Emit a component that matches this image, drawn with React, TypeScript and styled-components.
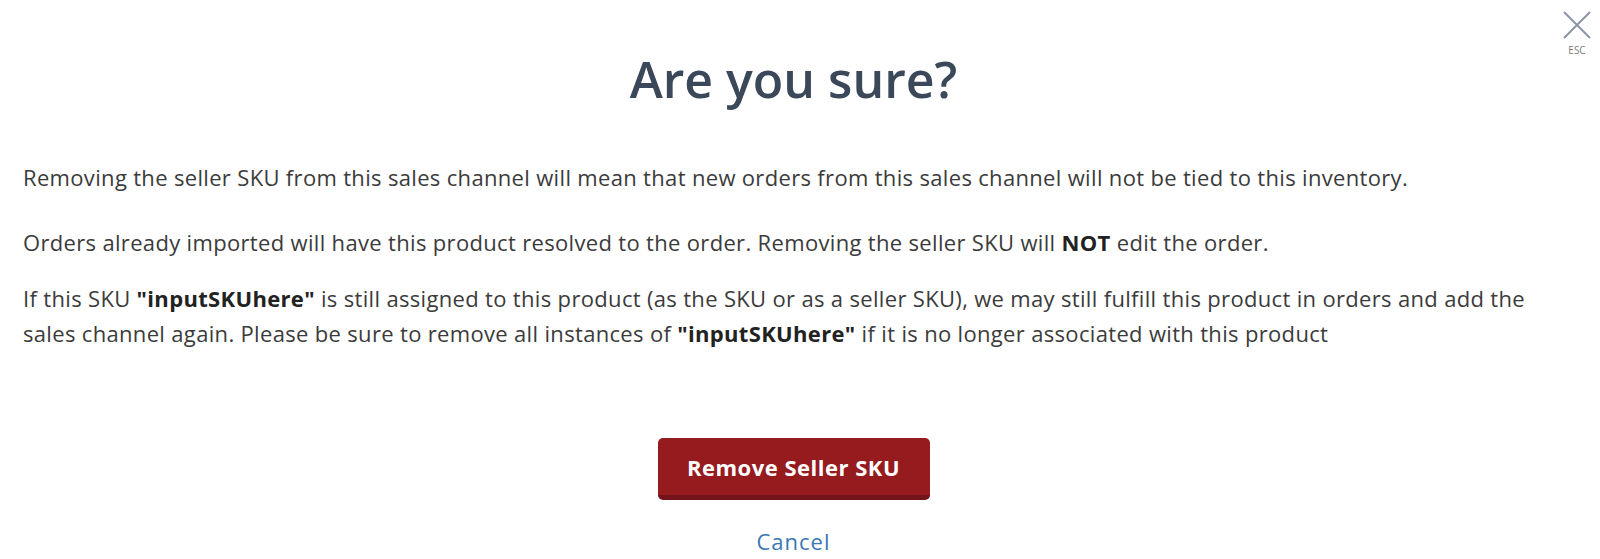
import React from "react";
import styled, { createGlobalStyle } from "styled-components";

const GlobalStyle = createGlobalStyle`
  html, body {
    margin: 0;
    padding: 0;
    background: #ffffff;
  }
  body {
    font-family: "Open Sans", "Lato", sans-serif;
    -webkit-font-smoothing: antialiased;
  }
`;

const Modal = styled.div`
  position: relative;
  width: 1600px;
  height: 559px;
  box-sizing: border-box;
  padding: 0 36px 0 23px;
  display: flex;
  flex-direction: column;
  overflow: hidden;
`;

const CloseButton = styled.button`
  position: absolute;
  top: 11px;
  right: 6px;
  width: 34px;
  border: none;
  background: transparent;
  padding: 0;
  display: flex;
  flex-direction: column;
  align-items: center;
  cursor: pointer;
`;

const EscLabel = styled.span`
  font-family: "Open Sans", sans-serif;
  font-size: 10px;
  line-height: 12px;
  color: #7a7a7a;
  margin-top: 5px;
`;

const Title = styled.h1`
  margin: 48px 0 0;
  font-size: 50px;
  line-height: 62px;
  font-weight: 600;
  color: #3b4859;
  text-align: center;
`;

const Body = styled.div`
  margin-top: 50px;
  display: flex;
  flex-direction: column;
`;

const Paragraph = styled.p<{ $gapAfter?: number }>`
  margin: 0 0 ${(p) => p.$gapAfter ?? 0}px;
  font-size: 22px;
  line-height: 35px;
  letter-spacing: 0.33px;
  color: #3b3b3b;

  strong {
    font-weight: 700;
    color: #222;
  }
`;

const Actions = styled.div`
  margin-top: 87px;
  display: flex;
  flex-direction: column;
  align-items: center;
  gap: 26px;
`;

const DangerButton = styled.button`
  width: 272px;
  height: 62px;
  box-sizing: border-box;
  border: none;
  border-bottom: 5px solid #74141a;
  border-radius: 5px;
  background: #961b1f;
  color: #ffffff;
  font-family: "Open Sans", sans-serif;
  font-size: 22px;
  font-weight: 700;
  letter-spacing: 0.5px;
  padding: 0;
  cursor: pointer;
`;

const CancelLink = styled.a`
  font-size: 22px;
  line-height: 30px;
  letter-spacing: 1px;
  color: #3a77b4;
  text-decoration: none;
  cursor: pointer;
`;

export default function App() {
  return (
    <>
      <GlobalStyle />
      <Modal>
        <CloseButton aria-label="Close">
          <svg width="30" height="28" viewBox="0 0 30 28" fill="none">
            <path d="M2 1 L28 27 M28 1 L2 27" stroke="#8b95a5" strokeWidth="2" />
          </svg>
          <EscLabel>ESC</EscLabel>
        </CloseButton>
        <Title>Are you sure?</Title>
        <Body>
          <Paragraph $gapAfter={30}>
            Removing the seller SKU from this sales channel will mean that new orders from this sales
            channel will not be tied to this inventory.
          </Paragraph>
          <Paragraph $gapAfter={21}>
            Orders already imported will have this product resolved to the order. Removing the seller
            SKU will <strong>NOT</strong> edit the order.
          </Paragraph>
          <Paragraph>
            If this SKU <strong>"inputSKUhere"</strong> is still assigned to this product (as the SKU or
            as a seller SKU), we may still fulfill this product in orders and add the sales channel
            again. Please be sure to remove all instances of <strong>"inputSKUhere"</strong> if it is no
            longer associated with this product
          </Paragraph>
        </Body>
        <Actions>
          <DangerButton>Remove Seller SKU</DangerButton>
          <CancelLink>Cancel</CancelLink>
        </Actions>
      </Modal>
    </>
  );
}
